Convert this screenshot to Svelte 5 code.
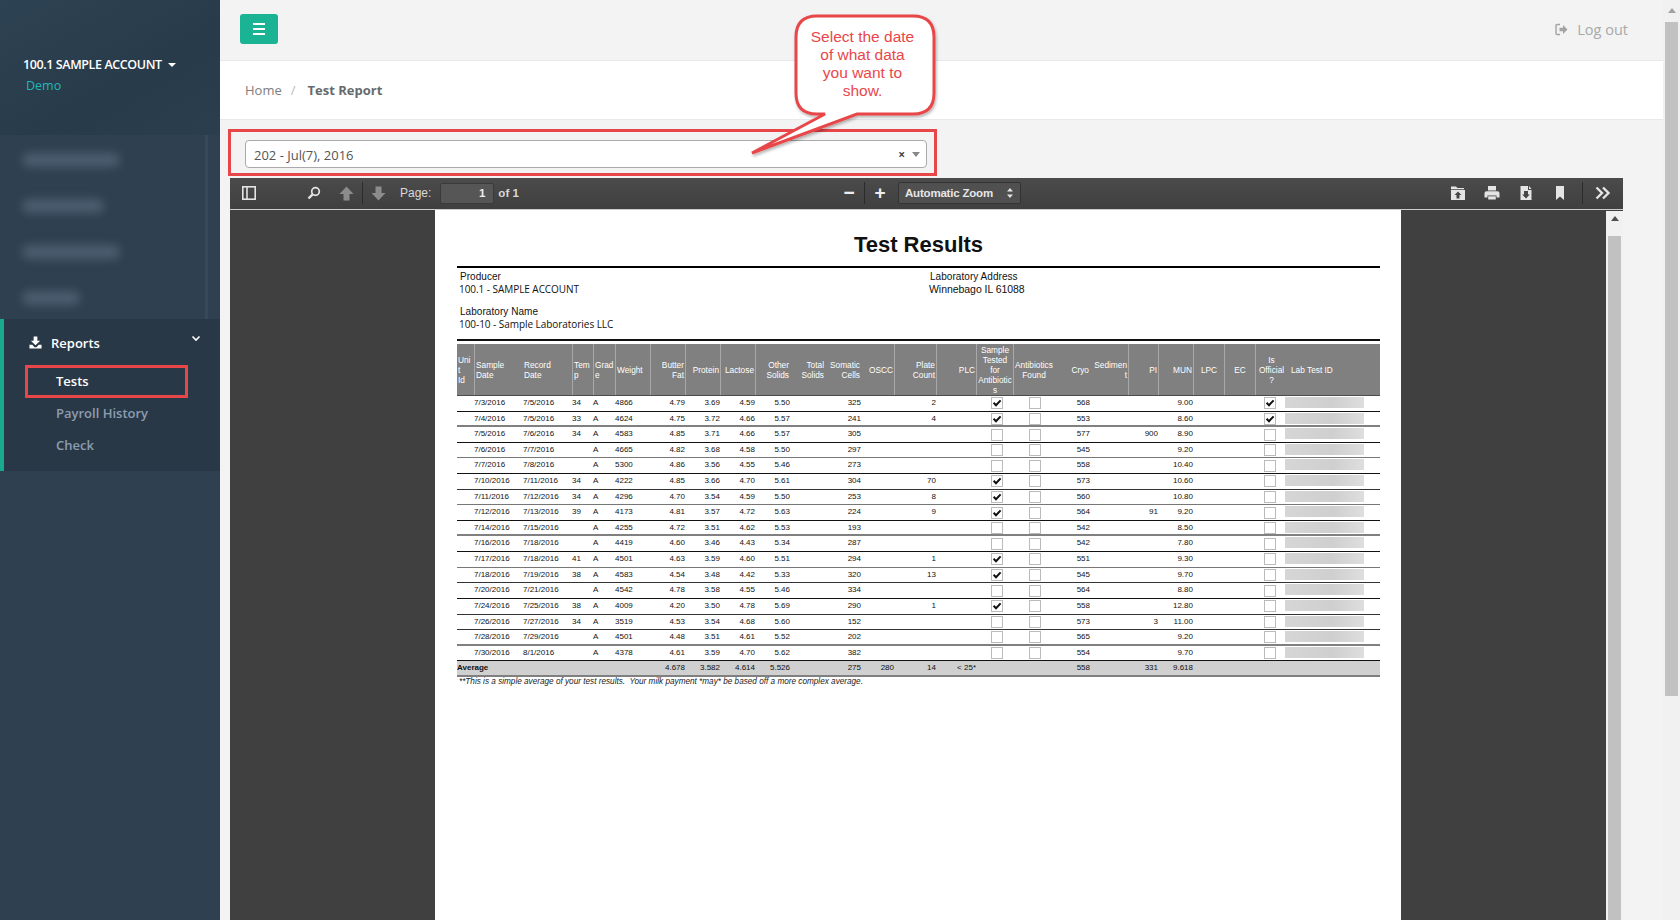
<script lang="ts">
  // Column widths follow the report's printed table
  const columns = [
    { w: 17, head: ['Uni', 't', 'Id'], align: 'left' },
    { w: 49, head: ['Sample', 'Date'], align: 'left', sep: true },
    { w: 49, head: ['Record', 'Date'], align: 'left' },
    { w: 21, head: ['Tem', 'p'], align: 'left', sep: true },
    { w: 22, head: ['Grad', 'e'], align: 'left', sep: true },
    { w: 35, head: ['Weight'], align: 'left', sep: true },
    { w: 35, head: ['Butter', 'Fat'], align: 'right', sep: true },
    { w: 35, head: ['Protein'], align: 'right', sep: true },
    { w: 35, head: ['Lactose'], align: 'right', sep: true },
    { w: 35, head: ['Other', 'Solids'], align: 'right', sep: true },
    { w: 35, head: ['Total', 'Solids'], align: 'right' },
    { w: 36, head: ['Somatic', 'Cells'], align: 'right' },
    { w: 33, head: ['OSCC'], align: 'right' },
    { w: 42, head: ['Plate', 'Count'], align: 'right', sep: true },
    { w: 40, head: ['PLC'], align: 'right', sep: true },
    { w: 37, head: ['Sample', 'Tested', 'for', 'Antibiotic', 's'], align: 'center', sep: true },
    { w: 41, head: ['Antibiotics', 'Found'], align: 'center', sep: true },
    { w: 36, head: ['Cryo'], align: 'right' },
    { w: 38, head: ['Sedimen', 't'], align: 'right' },
    { w: 30, head: ['PI'], align: 'right', sep: true },
    { w: 35, head: ['MUN'], align: 'right', sep: true },
    { w: 31, head: ['LPC'], align: 'center', sep: true },
    { w: 31, head: ['EC'], align: 'center', sep: true },
    { w: 32, head: ['Is', 'Official', '?'], align: 'center', sep: true },
    { w: 93, head: ['Lab Test ID'], align: 'left', inset: true }
  ];
  const gridCols = columns.map((c) => c.w + 'px').join(' ');

  // sample, record, temp, weight, butter, protein, lactose, other, somatic, plate, tested, cryo, pi, mun, official, line colour
  const rows = [
    ['7/3/2016', '7/5/2016', '34', '4866', '4.79', '3.69', '4.59', '5.50', '325', '2', 1, '568', '', '9.00', 1, 'black'],
    ['7/4/2016', '7/5/2016', '33', '4624', '4.75', '3.72', '4.66', '5.57', '241', '4', 1, '553', '', '8.60', 1, 'thick'],
    ['7/5/2016', '7/6/2016', '34', '4583', '4.85', '3.71', '4.66', '5.57', '305', '', 0, '577', '900', '8.90', 0, 'black'],
    ['7/6/2016', '7/7/2016', '', '4665', '4.82', '3.68', '4.58', '5.50', '297', '', 0, '545', '', '9.20', 0, 'gray'],
    ['7/7/2016', '7/8/2016', '', '5300', '4.86', '3.56', '4.55', '5.46', '273', '', 0, '558', '', '10.40', 0, 'black'],
    ['7/10/2016', '7/11/2016', '34', '4222', '4.85', '3.66', '4.70', '5.61', '304', '70', 1, '573', '', '10.60', 0, 'dark'],
    ['7/11/2016', '7/12/2016', '34', '4296', '4.70', '3.54', '4.59', '5.50', '253', '8', 1, '560', '', '10.80', 0, 'gray'],
    ['7/12/2016', '7/13/2016', '39', '4173', '4.81', '3.57', '4.72', '5.63', '224', '9', 1, '564', '91', '9.20', 0, 'black'],
    ['7/14/2016', '7/15/2016', '', '4255', '4.72', '3.51', '4.62', '5.53', '193', '', 0, '542', '', '8.50', 0, 'thick'],
    ['7/16/2016', '7/18/2016', '', '4419', '4.60', '3.46', '4.43', '5.34', '287', '', 0, '542', '', '7.80', 0, 'black'],
    ['7/17/2016', '7/18/2016', '41', '4501', '4.63', '3.59', '4.60', '5.51', '294', '1', 1, '551', '', '9.30', 0, 'gray'],
    ['7/18/2016', '7/19/2016', '38', '4583', '4.54', '3.48', '4.42', '5.33', '320', '13', 1, '545', '', '9.70', 0, 'dark'],
    ['7/20/2016', '7/21/2016', '', '4542', '4.78', '3.58', '4.55', '5.46', '334', '', 0, '564', '', '8.80', 0, 'black'],
    ['7/24/2016', '7/25/2016', '38', '4009', '4.20', '3.50', '4.78', '5.69', '290', '1', 1, '558', '', '12.80', 0, 'dark'],
    ['7/26/2016', '7/27/2016', '34', '3519', '4.53', '3.54', '4.68', '5.60', '152', '', 0, '573', '3', '11.00', 0, 'dark'],
    ['7/28/2016', '7/29/2016', '', '4501', '4.48', '3.51', '4.61', '5.52', '202', '', 0, '565', '', '9.20', 0, 'thick'],
    ['7/30/2016', '8/1/2016', '', '4378', '4.61', '3.59', '4.70', '5.62', '382', '', 0, '554', '', '9.70', 0, 'black']
  ];
</script>

{#snippet box(checked)}
  <svg class="cb" viewBox="0 0 12 12" width="12" height="12">
    <rect x="0.5" y="0.5" width="11" height="11" fill="#fff" stroke="#bbb" />
    {#if checked}
      <path d="M2.6 5.8 L5 8.2 L9.6 3.4" fill="none" stroke="#111" stroke-width="2" />
    {/if}
  </svg>
{/snippet}

<div class="app">
  <aside class="sidebar">
    <div class="profile">
      <div class="account">100.1 SAMPLE ACCOUNT <span class="caret"></span></div>
      <div class="demo">Demo</div>
    </div>

    <div class="hidden-nav">
      <div class="smudge" style="width: 98px"></div>
      <div class="smudge" style="width: 82px"></div>
      <div class="smudge" style="width: 98px"></div>
      <div class="smudge" style="width: 58px"></div>
    </div>

    <nav class="reports">
      <div class="reports-head">
        <svg width="13" height="13" viewBox="0 0 14 14" fill="#fff">
          <path d="M5 0.5 H9 V5 H12 L7 10 L2 5 H5 Z" />
          <path d="M0.5 9.5 H3.5 L6 12 H8 L10.5 9.5 H13.5 V13.5 H0.5 Z" />
        </svg>
        <span>Reports</span>
        <svg class="chev" width="10" height="8" viewBox="0 0 10 8" fill="none" stroke="#fff" stroke-width="1.6">
          <path d="M1.5 1.5 L5 5 L8.5 1.5" />
        </svg>
      </div>
      <a class="sub active" href="#tests">Tests</a>
      <a class="sub" href="#payroll">Payroll History</a>
      <a class="sub" href="#check">Check</a>
    </nav>
  </aside>

  <main class="main">
    <header class="topnav">
      <button class="menu-btn" aria-label="Menu">
        <span></span><span></span><span></span>
      </button>
      <a class="logout" href="#logout">
        <svg width="13" height="13" viewBox="0 0 13 13">
          <path d="M5 1.5 H2 Q1 1.5 1 2.5 V10.5 Q1 11.5 2 11.5 H5" fill="none" stroke="#a3a3a3" stroke-width="1.4" />
          <path d="M4.5 4.8 H8 V2 L12.5 6.5 L8 11 V8.2 H4.5 Z" fill="#a3a3a3" />
        </svg>
        Log out
      </a>
    </header>

    <div class="breadcrumb">
      <span class="crumb">Home</span>
      <span class="slash">/</span>
      <strong>Test Report</strong>
    </div>

    <div class="select">
      <span>202 - Jul(7), 2016</span>
      <span class="clear">×</span>
      <span class="arrow"></span>
    </div>

    <section class="viewer">
      <div class="toolbar">
        <div class="tb-left">
          <svg class="i-toggle" width="14" height="14" viewBox="0 0 14 14" fill="none" stroke="#e4e4e4" stroke-width="1.6">
            <rect x="0.8" y="0.8" width="12.4" height="12.4" />
            <path d="M5 1 V13" />
          </svg>
          <svg class="i-search" width="14" height="14" viewBox="0 0 14 14" fill="none" stroke="#e4e4e4">
            <circle cx="8.5" cy="5.5" r="3.8" stroke-width="1.7" />
            <path d="M5.6 8.4 L1.5 12.5" stroke-width="2.4" />
          </svg>
          <svg class="i-up" width="15" height="15" viewBox="0 0 15 15" fill="#8c8c8c">
            <path d="M7.5 0.5 L14.5 8 H10.5 V14.5 H4.5 V8 H0.5 Z" />
          </svg>
          <span class="tb-sep"></span>
          <svg class="i-down" width="15" height="15" viewBox="0 0 15 15" fill="#8c8c8c">
            <path d="M7.5 14.5 L14.5 7 H10.5 V0.5 H4.5 V7 H0.5 Z" />
          </svg>
          <span class="tb-label">Page:</span>
          <div class="page-input">1</div>
          <span class="tb-of">of 1</span>
        </div>

        <div class="tb-mid">
          <span class="zoom-btn">−</span>
          <span class="tb-sep"></span>
          <span class="zoom-btn">+</span>
          <div class="zoom-select">
            Automatic Zoom
            <svg width="6" height="10" viewBox="0 0 6 10" fill="#e4e4e4">
              <path d="M3 0 L6 3.5 H0 Z M3 10 L0 6.5 H6 Z" />
            </svg>
          </div>
        </div>

        <div class="tb-right">
          <svg width="16" height="16" viewBox="0 0 16 16" fill="#e4e4e4">
            <path d="M1 1.5 H6 L7.5 3 H14 V4.2 H1 Z" />
            <path d="M1 5 H15 V15 H1 Z M8 6.5 L4.5 10 H6.5 V13.5 H9.5 V10 H11.5 Z" fill-rule="evenodd" />
          </svg>
          <svg width="16" height="16" viewBox="0 0 16 16" fill="#e4e4e4">
            <path d="M4 1 H12 V5.5 H4 Z" />
            <path d="M2.5 6.2 H13.5 Q15.5 6.2 15.5 8.2 V12.5 H12.5 V10.5 H3.5 V12.5 H0.5 V8.2 Q0.5 6.2 2.5 6.2 Z" />
            <path d="M4.2 11.3 H11.8 V14.5 H4.2 Z" />
          </svg>
          <svg width="16" height="16" viewBox="0 0 16 16" fill="#e4e4e4">
            <path d="M2.5 1 H10 V5 H13.5 V15 H2.5 Z M8 6 H6 V9.5 H4.2 L8 13.5 L11.8 9.5 H10 V6 Z" fill-rule="evenodd" />
            <path d="M11 1 L13.5 4 H11 Z" />
          </svg>
          <svg width="16" height="16" viewBox="0 0 16 16" fill="#e4e4e4">
            <path d="M4 1 H12 V15 L8 11.5 L4 15 Z" />
          </svg>
          <span class="tb-sep"></span>
          <svg width="16" height="14" viewBox="0 0 16 14" fill="none" stroke="#e4e4e4" stroke-width="2.4">
            <path d="M1.5 1.5 L7 7 L1.5 12.5 M8 1.5 L13.5 7 L8 12.5" />
          </svg>
        </div>
      </div>

      <div class="viewer-body">
        <div class="page">
          <h1>Test Results</h1>

          <div class="info">
            <div>
              <div class="lbl">Producer</div>
              <div class="val">100.1 - SAMPLE ACCOUNT</div>
              <div class="lbl second">Laboratory Name</div>
              <div class="val">100-10 - Sample Laboratories LLC</div>
            </div>
            <div class="info-right">
              <div class="lbl">Laboratory Address</div>
              <div class="val addr">Winnebago IL 61088</div>
            </div>
          </div>

          <div class="report">
            <div class="thead" style="grid-template-columns: {gridCols}">
              {#each columns as col}
                <div class="th {col.align}" class:sep={col.sep} class:inset={col.inset}>
                  {#each col.head as line}
                    <span>{line}</span>
                  {/each}
                </div>
              {/each}
            </div>

            {#each rows as r}
              <div class="tr {r[15]}" style="grid-template-columns: {gridCols}">
                <div></div>
                <div class="td">{r[0]}</div>
                <div class="td">{r[1]}</div>
                <div class="td">{r[2]}</div>
                <div class="td">A</div>
                <div class="td">{r[3]}</div>
                <div class="td num">{r[4]}</div>
                <div class="td num">{r[5]}</div>
                <div class="td num">{r[6]}</div>
                <div class="td num">{r[7]}</div>
                <div></div>
                <div class="td num">{r[8]}</div>
                <div></div>
                <div class="td num">{r[9]}</div>
                <div></div>
                <div class="td tick t1">{@render box(r[10])}</div>
                <div class="td tick t2">{@render box(0)}</div>
                <div class="td num">{r[11]}</div>
                <div></div>
                <div class="td num">{r[12]}</div>
                <div class="td num">{r[13]}</div>
                <div></div>
                <div></div>
                <div class="td tick t3">{@render box(r[14])}</div>
                <div class="td"><span class="redacted"></span></div>
              </div>
            {/each}

            <div class="tr avg" style="grid-template-columns: {gridCols}">
              <div class="td avg-label">Average</div>
              <div></div><div></div><div></div><div></div><div></div>
              <div class="td num">4.678</div>
              <div class="td num">3.582</div>
              <div class="td num">4.614</div>
              <div class="td num">5.526</div>
              <div></div>
              <div class="td num">275</div>
              <div class="td num">280</div>
              <div class="td num">14</div>
              <div class="td num">&lt; 25*</div>
              <div></div>
              <div></div>
              <div class="td num">558</div>
              <div></div>
              <div class="td num">331</div>
              <div class="td num">9.618</div>
              <div></div><div></div><div></div><div></div>
            </div>
          </div>

          <p class="footnote">**This is a simple average of your test results.&nbsp; Your milk payment *may* be based off a more complex average.</p>
        </div>
      </div>
    </section>
  </main>

  <div class="bar outer"><span class="thumb"></span></div>
  <div class="bar inner"><span class="thumb"></span></div>

  <!-- Annotations drawn on top of the page -->
  <div class="mark mark-select"></div>
  <div class="mark mark-tests"></div>
  <svg class="callout" width="1680" height="200" viewBox="0 0 1680 200">
    <defs>
      <filter id="sh" x="-10%" y="-10%" width="120%" height="120%">
        <feDropShadow dx="1" dy="2" stdDeviation="1.5" flood-color="#000" flood-opacity="0.3" />
      </filter>
    </defs>
    <path
      d="M817 16 H913 Q934 16 934 37 V93 Q934 114 913 114 H857 L752 153 L825 114 H817 Q796 114 796 93 V37 Q796 16 817 16 Z"
      fill="#fff"
      stroke="#e8474a"
      stroke-width="3"
      filter="url(#sh)"
    />
  </svg>
  <div class="callout-text">Select the date<br />of what data<br />you want to<br />show.</div>
</div>

<style>
  :global(body) {
    margin: 0;
    overflow: hidden;
  }

  .app {
    position: relative;
    display: flex;
    width: 1680px;
    height: 920px;
    overflow: hidden;
    font-family: 'Open Sans', sans-serif;
    background: #f3f3f3;
  }

  /* Sidebar */
  .sidebar {
    width: 220px;
    flex-shrink: 0;
    background: #2f4050;
    color: #fff;
  }

  .profile {
    height: 135px;
    box-sizing: border-box;
    padding: 55px 0 0 23px;
    background: linear-gradient(150deg, #2d4252 0%, #283b4b 60%, #2a3e4e 100%);
  }

  .account {
    font-size: 12.5px;
    font-weight: 600;
    line-height: 20px;
    letter-spacing: -0.4px;
  }

  .caret {
    display: inline-block;
    margin-left: 3px;
    vertical-align: 2px;
    border-left: 4px solid transparent;
    border-right: 4px solid transparent;
    border-top: 4px solid #fff;
  }

  .demo {
    margin: 1px 0 0 3px;
    font-size: 12.5px;
    line-height: 20px;
    color: #23b7b7;
  }

  .hidden-nav {
    height: 184px;
    box-sizing: border-box;
    margin-right: 12px;
    padding: 18px 0 0 22px;
    border-right: 3px solid #37485a;
    display: flex;
    flex-direction: column;
    gap: 32px;
  }

  .smudge {
    height: 14px;
    background: #4d5d70;
    border-radius: 7px;
    filter: blur(5px);
  }

  .reports {
    height: 152px;
    box-sizing: border-box;
    background: #293846;
    border-left: 4px solid #19aa8d;
  }

  .reports-head {
    display: flex;
    align-items: center;
    height: 46px;
    padding: 1px 0 0 25px;
    box-sizing: border-box;
    font-size: 13px;
    font-weight: 600;
  }

  .reports-head span {
    margin-left: 9px;
  }

  .chev {
    margin: -7px 0 0 91px;
  }

  .sub {
    display: block;
    height: 32px;
    padding-left: 52px;
    font-size: 13px;
    font-weight: 600;
    line-height: 32px;
    color: #8c9db1;
    text-decoration: none;
  }

  .sub.active {
    color: #fff;
  }

  /* Main column */
  .main {
    width: 1443px;
    flex-shrink: 0;
  }

  .topnav {
    display: flex;
    align-items: center;
    justify-content: space-between;
    height: 60px;
    padding: 0 35px 0 20px;
    border-bottom: 1px solid #e7eaec;
  }

  .menu-btn {
    display: flex;
    flex-direction: column;
    align-items: center;
    justify-content: center;
    gap: 3px;
    width: 38px;
    height: 30px;
    margin-top: -2px;
    padding: 0;
    border: 0;
    border-radius: 3px;
    background: #1ab394;
  }

  .menu-btn span {
    width: 12px;
    height: 2px;
    background: #fff;
  }

  .logout {
    display: flex;
    align-items: center;
    gap: 9px;
    margin-top: -1px;
    font-size: 14.5px;
    color: #a7a9ab;
    text-decoration: none;
  }

  .breadcrumb {
    display: flex;
    align-items: center;
    height: 58px;
    padding-left: 25px;
    background: #fff;
    border-bottom: 1px solid #e7eaec;
    font-size: 13px;
    color: #676a6c;
  }

  .crumb {
    color: #7d7d7d;
  }

  .slash {
    margin: 0 12px 0 9px;
    color: #bbb;
  }

  .select {
    display: flex;
    align-items: center;
    box-sizing: border-box;
    width: 682px;
    height: 28px;
    margin: 20px 0 0 25px;
    padding: 1px 6px 0 8px;
    background: #fff;
    border: 1px solid #aaa;
    border-radius: 4px;
    font-size: 13px;
    color: #555;
  }

  .clear {
    margin-left: auto;
    font-size: 12px;
    font-weight: 700;
    color: #444;
  }

  .arrow {
    margin-left: 7px;
    border-left: 4px solid transparent;
    border-right: 4px solid transparent;
    border-top: 5px solid #888;
  }

  /* PDF viewer */
  .viewer {
    width: 1393px;
    height: 742px;
    margin: 10px 0 0 10px;
    font-family: 'Liberation Sans', Arial, sans-serif;
    overflow: hidden;
  }

  .toolbar {
    display: flex;
    align-items: center;
    height: 32px;
    box-sizing: border-box;
    padding-bottom: 1px;
    background: linear-gradient(#4b4b4b, #3f3f3f);
    border-bottom: 1px solid #333;
    color: #d9d9d9;
    font-size: 11.5px;
    font-weight: 700;
  }

  .tb-left,
  .tb-mid,
  .tb-right {
    display: flex;
    align-items: center;
  }

  .tb-left {
    width: 611px;
    padding-left: 12px;
    box-sizing: border-box;
  }

  .i-search {
    margin-left: 51px;
  }

  .i-up {
    margin-left: 18px;
  }

  .i-down {
    margin-left: 8px;
  }

  .tb-sep {
    width: 1px;
    height: 22px;
    background: #2b2b2b;
    margin-left: 8px;
  }

  .tb-label {
    margin-left: 14px;
    font-size: 12px;
    font-weight: 400;
    color: #d9d9d9;
  }

  .page-input {
    width: 54px;
    height: 21px;
    margin-left: 9px;
    box-sizing: border-box;
    padding-right: 8px;
    background: #565656;
    border: 1px solid #3a3a3a;
    border-radius: 2px;
    text-align: right;
    line-height: 19px;
    color: #eee;
  }

  .tb-of {
    margin-left: 4px;
  }

  .tb-mid {
    width: 402px;
  }

  .zoom-btn {
    width: 16px;
    text-align: center;
    font-size: 19px;
    line-height: 20px;
    color: #eee;
  }

  .tb-mid .tb-sep {
    margin: 0 7px;
  }

  .zoom-select {
    display: flex;
    align-items: center;
    justify-content: space-between;
    box-sizing: border-box;
    width: 123px;
    height: 22px;
    margin-left: 10px;
    padding: 0 7px 0 6px;
    background: #505050;
    border: 1px solid #333;
    border-radius: 2px;
    color: #e6e6e6;
    letter-spacing: -0.2px;
  }

  .tb-right {
    gap: 18px;
    padding-left: 207px;
  }

  .tb-right .tb-sep {
    margin: 0 -6px 0 -4px;
  }

  .viewer-body {
    display: flex;
    height: 710px;
    padding-left: 205px;
    background: #404040;
    border-top: 1px solid #ccc;
    margin-top: -1px;
  }

  .page {
    width: 966px;
    box-sizing: border-box;
    height: 710px;
    padding: 0 21px 0 22px;
    background: #fff;
    color: #111;
  }

  h1 {
    margin: 0;
    height: 58px;
    padding-top: 20px;
    box-sizing: border-box;
    border-bottom: 2px solid #000;
    text-align: center;
    font-size: 22px;
    line-height: 30px;
  }

  .info {
    display: grid;
    grid-template-columns: 470px 1fr;
    height: 73px;
    box-sizing: border-box;
    padding: 2px 0 0 3px;
    border-bottom: 2px solid #111;
    font-size: 10px;
    line-height: 13px;
  }

  .val {
    margin-left: -1px;
    font-family: 'Open Sans', sans-serif;
    font-size: 10px;
    letter-spacing: -0.05px;
  }

  .val.addr {
    margin-left: -1px;
    font-family: 'Liberation Sans', Arial, sans-serif;
    font-size: 10.5px;
  }

  .lbl {
    letter-spacing: 0.05px;
  }

  .second {
    margin-top: 9px;
  }

  .report {
    margin-top: 3px;
  }

  .thead {
    display: grid;
    height: 52px;
    background: #808080;
    border-bottom: 1px solid #4c4c4c;
    box-sizing: border-box;
    font-size: 8.3px;
    line-height: 10px;
    color: #fff;
  }

  .th {
    display: flex;
    flex-direction: column;
    justify-content: center;
    white-space: nowrap;
    padding: 0 1px;
    box-sizing: border-box;
  }

  .th.sep {
    border-left: 1px solid #a8a8a8;
  }

  .th.left {
    align-items: flex-start;
  }

  .th.right {
    align-items: flex-end;
  }

  .th.center {
    align-items: center;
  }

  .th.inset {
    padding-left: 4px;
  }

  .tr {
    display: grid;
    box-sizing: border-box;
    height: 15.62px;
    border-bottom: 1px solid #111;
    font-size: 8px;
    line-height: 14px;
    color: #111;
  }

  .tr.dark {
    border-bottom-color: #333;
  }

  .tr.gray {
    border-bottom-color: #777;
  }

  .tr.thick {
    border-bottom: 2px solid #808080;
  }

  .td {
    white-space: nowrap;
    min-width: 0;
    position: relative;
  }

  .td.num {
    text-align: right;
  }

  .tick {
    display: flex;
    align-items: center;
  }

  .t1 {
    padding-left: 15px;
  }

  .t2 {
    padding-left: 16px;
  }

  .t3 {
    padding-left: 9px;
  }

  .cb {
    flex-shrink: 0;
  }

  .redacted {
    display: block;
    width: 79px;
    height: 11px;
    margin: 1px 0 0 -2px;
    background: linear-gradient(90deg, #d6d6d6, #cfcfcf 60%, #dedede);
  }

  .tr.avg {
    height: 16px;
    background: #d0d0d0;
    border-bottom: 2px solid #808080;
    color: #111;
  }

  .avg-label {
    font-weight: 700;
  }

  .footnote {
    margin: 0 0 0 2px;
    font-size: 8.2px;
    line-height: 10px;
    font-style: italic;
    color: #222;
  }

  /* Scrollbars */
  .bar {
    position: absolute;
    background: #f1f1f1;
  }

  .bar::before {
    content: '';
    position: absolute;
    left: 50%;
    margin-left: -4px;
    border-left: 4px solid transparent;
    border-right: 4px solid transparent;
    border-bottom: 5px solid #505050;
  }

  .thumb {
    position: absolute;
    background: #c1c1c1;
  }

  .bar.outer {
    top: 0;
    left: 1663px;
    width: 17px;
    height: 920px;
  }

  .bar.outer::before {
    top: 8px;
    border-bottom-color: #a3a3a3;
  }

  .bar.outer .thumb {
    top: 22px;
    left: 2px;
    width: 13px;
    height: 674px;
  }

  .bar.inner {
    top: 211px;
    left: 1606px;
    width: 17px;
    height: 709px;
  }

  .bar.inner::before {
    top: 5px;
  }

  .bar.inner .thumb {
    top: 25px;
    left: 2px;
    width: 13px;
    height: 684px;
  }

  /* Annotations */
  .mark {
    position: absolute;
    box-sizing: border-box;
    border: 3px solid #e8474a;
  }

  .mark-select {
    left: 228px;
    top: 129px;
    width: 709px;
    height: 47px;
  }

  .mark-tests {
    left: 25px;
    top: 365px;
    width: 163px;
    height: 33px;
  }

  .callout {
    position: absolute;
    top: 0;
    left: 0;
    pointer-events: none;
  }

  .callout-text {
    position: absolute;
    left: 795px;
    top: 28px;
    width: 135px;
    text-align: center;
    font-family: 'Liberation Sans', Arial, sans-serif;
    font-size: 15.5px;
    line-height: 18px;
    color: #e8474a;
  }
</style>
